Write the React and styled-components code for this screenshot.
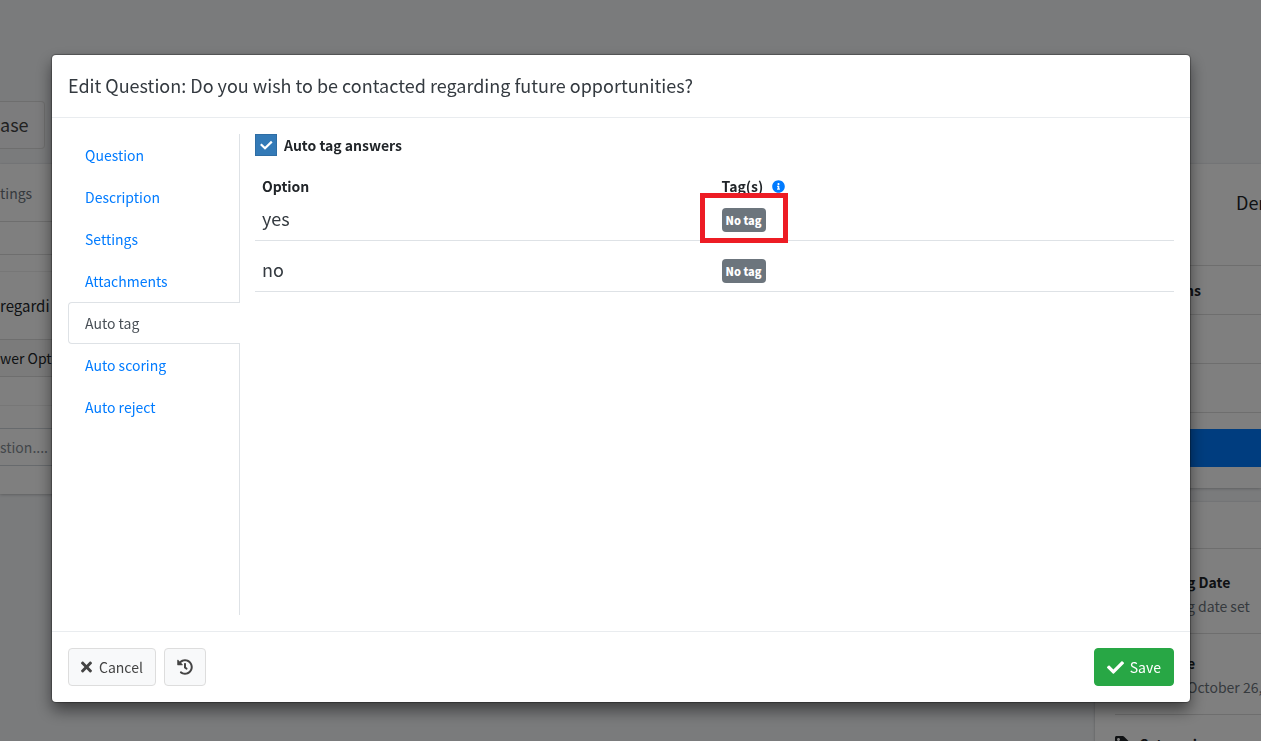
import React, { useState } from 'react';
import styled, { createGlobalStyle, css } from 'styled-components';
import { FaCheck, FaHistory, FaInfoCircle, FaTag, FaTimes } from 'react-icons/fa';

const GlobalStyle = createGlobalStyle`
  *, *::before, *::after {
    box-sizing: border-box;
  }

  body {
    margin: 0;
    background: #f4f6f9;
    color: #212529;
    font-family: "Source Sans Pro", "Noto Sans CJK SC", "Open Sans", sans-serif;
    font-size: 14px;
    line-height: 24px;
  }

  button, input {
    font: inherit;
  }
`;

/* page behind the dialog */

const Page = styled.div`
  display: flex;
  gap: 15px;
  height: 100vh;
  overflow: hidden;
  white-space: nowrap;
`;

const MainColumn = styled.main`
  flex: 1;
  min-width: 0;
  padding-top: 101px;
`;

const SideColumn = styled.aside`
  flex: 0 0 166px;
  min-width: 0;
  padding-top: 164px;
`;

const PageButton = styled.button`
  display: block;
  width: 45px;
  height: 48px;
  margin-bottom: 15px;
  padding: 0 0 2px;
  border: 1px solid #ddd;
  border-left: 0;
  border-radius: 0 4px 4px 0;
  background: #f8f9fa;
  color: #444;
  font-size: 18px;
  text-align: left;
`;

const Card = styled.section`
  display: flex;
  flex-direction: column;
  margin-bottom: 14px;
  background: #fff;
  box-shadow: 0 0 1px rgba(0, 0, 0, .125), 0 1px 3px rgba(0, 0, 0, .2);
`;

const CardRow = styled.div`
  display: flex;
  align-items: center;
  height: ${(props) => props.$height}px;
  border-bottom: 1px solid ${(props) => (props.$soft ? '#eee' : '#dcdcdc')};
  background: ${(props) => (props.$shaded ? '#f7f7f7' : 'transparent')};
  color: ${(props) => (props.$muted ? '#6c757d' : '#212529')};
`;

const QuestionRow = styled(CardRow)`
  font-size: 15px;
`;

const AnswerInput = styled.input`
  width: 100%;
  height: 38px;
  margin: 22px 0 28px;
  padding: 0;
  border: 1px solid #ced4da;
  border-width: 1px 0;
  background: transparent;

  &::placeholder {
    color: #868e96;
    opacity: 1;
  }
`;

const JobTitle = styled.h3`
  display: flex;
  align-items: center;
  height: 102px;
  margin: 0;
  padding: 0 0 26px 141px;
  border-bottom: 1px solid #dcdcdc;
  font-size: 18px;
  font-weight: 400;
`;

const SideHeading = styled(CardRow)`
  padding-left: 90px;
  font-weight: 700;
`;

const PublishButton = styled.button`
  width: 100%;
  height: 38px;
  margin: 16px 0 21px;
  border: 0;
  background: #007bff;
`;

const Fact = styled.div`
  margin-left: 20px;
  padding: ${(props) => (props.$first ? '21px' : '17px')} 0 15px ${(props) => (props.$indent ? '72px' : '0')};
  border-bottom: 1px solid #dcdcdc;

  strong {
    display: flex;
    align-items: center;
    gap: 8px;
  }

  span {
    display: block;
    color: #6c757d;
  }
`;

/* dialog */

const Backdrop = styled.div`
  position: fixed;
  inset: 0;
  padding: 55px 71px 39px 52px;
  background: rgba(0, 0, 0, .5);
  overflow: hidden;
`;

const Dialog = styled.div`
  display: flex;
  flex-direction: column;
  border-radius: 4px;
  background: #fff;
  box-shadow: 0 0 1px 1px rgba(0, 0, 0, .3), 0 8px 16px rgba(0, 0, 0, .5);
`;

const DialogHeader = styled.header`
  padding: 16px 16px 18px;
  border-bottom: 1px solid #e9ecef;
`;

const DialogTitle = styled.h2`
  margin: 0;
  color: #343a40;
  font-size: 18px;
  font-weight: 400;
  line-height: 28px;
`;

const DialogBody = styled.div`
  display: flex;
  gap: 15px;
  min-height: 513px;
  padding: 16px;
`;

const DialogFooter = styled.footer`
  display: flex;
  gap: 8px;
  padding: 16px;
  border-top: 1px solid #e9ecef;
`;

const TabList = styled.nav`
  display: flex;
  flex: 0 0 172px;
  flex-direction: column;
  border-right: 1px solid #dee2e6;
`;

const TabLink = styled.a`
  height: 42px;
  padding: 8px 16px;
  border: 1px solid transparent;
  border-right: 0;
  color: #007bff;
  text-decoration: none;

  ${(props) => props.$active && css`
    margin-right: -1px;
    border-color: #dee2e6;
    border-radius: 4px 0 0 4px;
    background: #fff;
    color: #495057;
  `}
`;

const TabPanel = styled.section`
  flex: 1;
  min-width: 0;
`;

const CheckLabel = styled.label`
  display: flex;
  align-items: center;
  gap: 7px;
  height: 22px;
  margin-bottom: 18px;
  font-weight: 700;
`;

const CheckMark = styled.span`
  display: grid;
  width: 22px;
  height: 22px;

  input, svg {
    grid-area: 1 / 1;
  }

  input {
    width: 22px;
    height: 22px;
    margin: 0;
    border: 1px solid #2e6da4;
    background: #fff;
    appearance: none;
  }

  input:checked {
    background: #337ab7;
  }

  svg {
    place-self: center;
    pointer-events: none;
  }
`;

const OptionTable = styled.table`
  width: 100%;
  border-collapse: separate;
  border-spacing: 0;
  table-layout: fixed;

  th {
    height: 25px;
    padding: 0 7px 1px;
    font-weight: 700;
    text-align: left;
  }

  td {
    padding: 9px 7px 8px;
    border-bottom: 1px solid #dee2e6;
    color: #343a40;
    font-size: 18px;
    line-height: 20px;
    vertical-align: top;
  }

  tr + tr td {
    padding-top: 18px;
  }
`;

const HeadCell = styled.div`
  display: flex;
  align-items: center;
  gap: 9px;
`;

const TagCell = styled.div`
  display: flex;
  position: relative;
  width: max-content;
`;

const TagBadge = styled.button`
  height: 24px;
  padding: 0 4px;
  border: 0;
  border-radius: 4px;
  background: #6c757d;
  color: #fff;
  font-size: 11px;
  font-weight: 900;
  line-height: 24px;
`;

const Highlight = styled.span`
  position: absolute;
  inset: -15px -22px -11px;
  border: 5px solid #ed1c24;
  pointer-events: none;
`;

const Button = styled.button`
  display: inline-flex;
  align-items: center;
  justify-content: center;
  gap: ${(props) => (props.$primary ? '6px' : '7px')};
  height: 38px;
  margin-left: ${(props) => (props.$primary ? 'auto' : '0')};
  padding: 0 12px;
  border: 1px solid ${(props) => (props.$primary ? '#28a745' : '#ddd')};
  border-radius: 4px;
  background: ${(props) => (props.$primary ? '#28a745' : '#f8f9fa')};
  color: ${(props) => (props.$primary ? '#fff' : '#444')};
`;

const CancelIcon = styled(FaTimes)`
  width: 11px;
  height: 16px;
`;

const SaveIcon = styled(FaCheck)`
  width: 17px;
  height: 17px;
`;

const tabs = ['Question', 'Description', 'Settings', 'Attachments', 'Auto tag', 'Auto scoring', 'Auto reject'];

const options = [
  { id: 1, name: 'yes', highlighted: true },
  { id: 2, name: 'no', highlighted: false },
];

function BackgroundPage() {
  return (
    <Page>
      <MainColumn>
        <PageButton>ase</PageButton>
        <Card>
          <CardRow $height={58} $muted>tings</CardRow>
          <CardRow $height={33} />
          <CardRow $height={17} $soft />
          <QuestionRow $height={68}>regardi</QuestionRow>
          <CardRow $height={37} $shaded>wer Opt</CardRow>
          <CardRow $height={29} $soft />
          <AnswerInput aria-label="Answer" placeholder="stion...." />
        </Card>
      </MainColumn>
      <SideColumn>
        <Card>
          <JobTitle>Dem</JobTitle>
          <SideHeading $height={49}>ns</SideHeading>
          <CardRow $height={49} />
          <CardRow $height={49} />
          <PublishButton aria-label="Publish" />
        </Card>
        <Card>
          <CardRow $height={47} />
          <Fact $indent $first>
            <strong>g Date</strong>
            <span>g date set</span>
          </Fact>
          <Fact $indent>
            <strong>e</strong>
            <span>October 26,</span>
          </Fact>
          <Fact>
            <strong><FaTag size={16} />Categories</strong>
          </Fact>
        </Card>
      </SideColumn>
    </Page>
  );
}

function App() {
  const [activeTab, setActiveTab] = useState('Auto tag');
  const [autoTag, setAutoTag] = useState(true);

  function selectTab(e, tab) {
    e.preventDefault();
    setActiveTab(tab);
  }

  return (
    <>
      <GlobalStyle />
      <BackgroundPage />
      <Backdrop>
        <Dialog role="dialog" aria-modal="true" aria-labelledby="dialog-title">
          <DialogHeader>
            <DialogTitle id="dialog-title">
              Edit Question: Do you wish to be contacted regarding future opportunities?
            </DialogTitle>
          </DialogHeader>
          <DialogBody>
            <TabList>
              {tabs.map((tab) => (
                <TabLink href="#" key={tab} $active={tab === activeTab} onClick={(e) => selectTab(e, tab)}>
                  {tab}
                </TabLink>
              ))}
            </TabList>
            <TabPanel>
              <CheckLabel htmlFor="auto-tag">
                <CheckMark>
                  <input
                    id="auto-tag"
                    type="checkbox"
                    checked={autoTag}
                    onChange={(e) => setAutoTag(e.target.checked)}
                  />
                  <svg width="14" height="12" viewBox="0 0 14 12" fill="none">
                    <path d="M1.8 5.2 6 9.2 12.8 2.6" stroke="#fff" strokeWidth="2.2" />
                  </svg>
                </CheckMark>
                Auto tag answers
              </CheckLabel>
              <OptionTable>
                <thead>
                  <tr>
                    <th>Option</th>
                    <th>
                      <HeadCell>
                        Tag(s)
                        <FaInfoCircle size={13} color="#007bff" />
                      </HeadCell>
                    </th>
                  </tr>
                </thead>
                <tbody>
                  {options.map((option) => (
                    <tr key={option.id}>
                      <td>{option.name}</td>
                      <td>
                        <TagCell>
                          <TagBadge>No tag</TagBadge>
                          {option.highlighted && <Highlight />}
                        </TagCell>
                      </td>
                    </tr>
                  ))}
                </tbody>
              </OptionTable>
            </TabPanel>
          </DialogBody>
          <DialogFooter>
            <Button>
              <CancelIcon />
              Cancel
            </Button>
            <Button aria-label="History">
              <FaHistory size={16} />
            </Button>
            <Button $primary>
              <SaveIcon />
              Save
            </Button>
          </DialogFooter>
        </Dialog>
      </Backdrop>
    </>
  );
}

export default App;
